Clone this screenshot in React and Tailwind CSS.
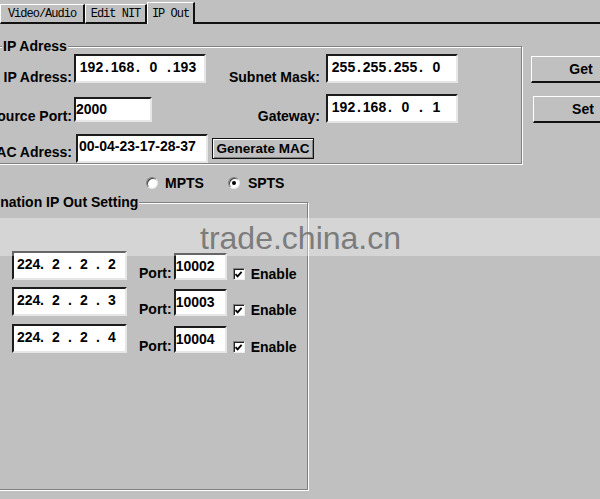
import React from 'react';

// sunken edit box, raised button, etched group frame
const edit = 'bg-white border-2 border-t-[#1c1c1c] border-l-[#1c1c1c] border-r-[#e6e6e6] border-b-[#e6e6e6]';
const raised = 'bg-[#c0c0c0] border-t border-l border-t-white border-l-white border-r-2 border-b-2 border-r-[#111] border-b-[#111]';
const frame = 'border border-[#808080] shadow-[inset_1px_1px_0_#fff,1px_1px_0_#fff]';
const label = 'flex justify-end whitespace-nowrap leading-[16px]';

const IpText = ({ parts, field, dot }) => (
    <div className="flex whitespace-pre">
        {parts.map((p, i) => (
            <React.Fragment key={i}>
                {i > 0 && <span className={`${dot} text-center`}>.</span>}
                <span className={`${field} text-center`}>{p}</span>
            </React.Fragment>
        ))}
    </div>
);

const Tab = ({ label, active, w }) => (
    <div className={`${w} ${active ? 'h-[22px]' : 'h-[20px] border-b-2 border-b-[#111]'} flex items-center justify-center border-t border-l border-t-white border-l-white border-r-2 border-r-[#111] font-['Liberation_Mono',monospace] font-normal text-[12px] tracking-[-1px] text-black`}>
        {label}
    </div>
);

const Radio = ({ checked }) => (
    <span className="w-[12px] h-[12px] rounded-full bg-white border border-t-[#808080] border-l-[#808080] border-r-[#e8e8e8] border-b-[#e8e8e8] shadow-[inset_1px_1px_0_#404040] flex items-center justify-center">
        {checked && <span className="w-[4px] h-[4px] rounded-full bg-black" />}
    </span>
);

const Check = () => (
    <span className="w-[12px] h-[12px] bg-white border border-t-[#808080] border-l-[#808080] border-r-[#eee] border-b-[#eee] shadow-[inset_1px_1px_0_#202020] flex items-center justify-center">
        <svg width="9" height="9" viewBox="0 0 9 9">
            <path d="M1.5 4.2 L3.6 6.4 L7.6 1.8" fill="none" stroke="#000" strokeWidth="1.8" />
        </svg>
    </span>
);

const OutRow = ({ ip, port, className }) => (
    <div className={`flex items-start ${className}`}>
        <div className={`${edit} w-[115px] h-[29px] pl-[3px] pt-[1px]`}>
            <IpText parts={ip} field="w-[22px]" dot="w-[6px]" />
        </div>
        <span className="ml-[12px] mt-[14px] leading-[16px]">Port:</span>
        <div className={`${edit} ml-[2px] mt-[2px] w-[53px] h-[27px] pt-[1px]`}>{port}</div>
        <div className="ml-[6px] mt-[17px]"><Check /></div>
        <span className="ml-[6px] mt-[15px] leading-[16px]">Enable</span>
    </div>
);

export default function App() {
    return (
        <div className="relative w-[600px] h-[499px] overflow-hidden bg-[#c0c0c0] font-['Liberation_Sans',Arial,sans-serif] text-[14px] font-bold text-black">
            {/* tab strip */}
            <div className="flex items-end h-[24px]">
                <Tab label="Video/Audio" w="w-[85px]" />
                <Tab label="Edit NIT" w="w-[62px]" />
                <Tab label="IP Out" w="w-[48px]" active />
                <div className="flex-1 border-b-2 border-b-[#111]" />
            </div>

            <div className="flex items-start">
                <fieldset className={`${frame} shrink-0 ml-[-6px] mt-[14px] w-[528px]`}>
                    <legend className="ml-[7px] px-[1px] leading-[16px] bg-[#c0c0c0]">IP Adress</legend>
                    <div className="flex items-start">
                        <span className={`${label} w-[77px] pt-[15px]`}>IP Adress:</span>
                        <div className={`${edit} ml-[2px] w-[132px] h-[29px] pl-[3px] pt-[1px]`}>
                            <IpText parts={['192', '168', '0', '193']} field="w-[25px]" dot="w-[6px]" />
                        </div>
                        <span className={`${label} w-[114px] pt-[15px]`}>Subnet Mask:</span>
                        <div className={`${edit} ml-[6px] w-[132px] h-[29px] pl-[3px] pt-[1px]`}>
                            <IpText parts={['255', '255', '255', '0']} field="w-[25px]" dot="w-[6px]" />
                        </div>
                    </div>
                    <div className="flex items-start mt-[9px]">
                        <span className={`${label} w-[77px] pt-[14px]`}>Source Port:</span>
                        <div className={`${edit} ml-[2px] mt-[3px] w-[78px] h-[25px]`}>2000</div>
                        <span className={`${label} w-[168px] pt-[14px]`}>Gateway:</span>
                        <div className={`${edit} ml-[6px] w-[132px] h-[29px] pl-[3px] pt-[1px]`}>
                            <IpText parts={['192', '168', '0', '1']} field="w-[25px]" dot="w-[6px]" />
                        </div>
                    </div>
                    <div className="flex items-start mt-[10px]">
                        <span className={`${label} w-[77px] pt-[10px]`}>MAC Adress:</span>
                        <div className={`${edit} ml-[4px] w-[132px] h-[29px] pl-[1px]`}>00-04-23-17-28-37</div>
                        <button className="ml-[4px] mt-[4px] w-[102px] h-[21px] bg-[#c0c0c0] border border-[#111] shadow-[inset_1px_1px_0_#fff,inset_-1px_-1px_0_#808080] text-[13.5px] leading-[16px]">
                            Generate MAC
                        </button>
                    </div>
                </fieldset>

                <div className="flex flex-col shrink-0 ml-[9px] mt-[32px]">
                    <button className={`${raised} w-[101px] h-[27px] leading-[16px]`}>Get</button>
                    <button className={`${raised} ml-[2px] mt-[13px] w-[101px] h-[27px] leading-[16px]`}>Set</button>
                </div>
            </div>

            {/* stream mode */}
            <div className="flex items-center h-[16px] mt-[11px] pl-[146px] leading-[16px]">
                <Radio />
                <span className="ml-[7px]">MPTS</span>
                <span className="ml-[24px]"><Radio checked /></span>
                <span className="ml-[8px]">SPTS</span>
            </div>

            <fieldset className={`${frame} ml-[-43px] mt-[3px] w-[351px] h-[296px]`}>
                <legend className="ml-[7px] px-[1px] leading-[16px] bg-[#c0c0c0]">Destination IP Out Setting</legend>
                <div className="ml-[54px] mt-[41px]">
                    <OutRow ip={['224', '2', '2', '2']} port="10002" />
                    <OutRow ip={['224', '2', '2', '3']} port="10003" className="mt-[5px]" />
                    <OutRow ip={['224', '2', '2', '4']} port="10004" className="mt-[6px]" />
                </div>
            </fieldset>

            {/* watermark band */}
            <div className="absolute left-0 right-0 top-[218px] h-[38px] bg-white/[0.33]" />
            <div className="absolute left-[200px] top-[222px] text-[32px] leading-[32px] font-normal text-[#7c7c7c]">
                trade.china.cn
            </div>
        </div>
    );
}
